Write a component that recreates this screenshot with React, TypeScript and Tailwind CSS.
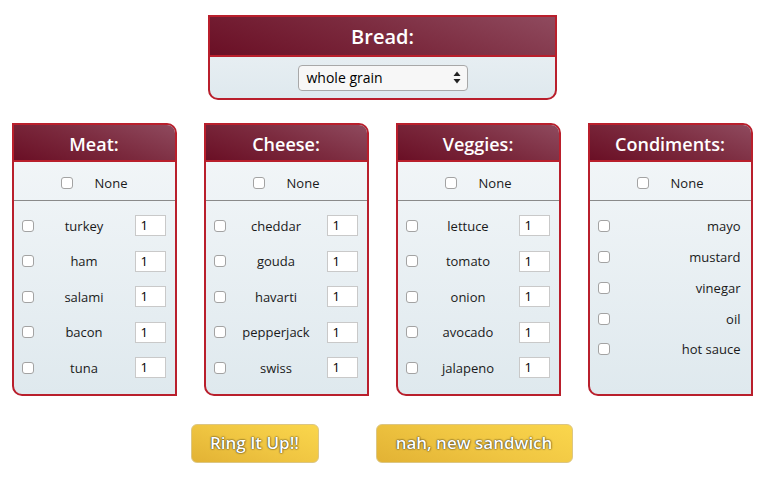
import React from "react";

const font = { fontFamily: '"Open Sans", "Lato", sans-serif' };

function Box() {
  return <span className="inline-block w-[12px] h-[12px] rounded-[3px] border border-[#a3a3a3] bg-white shrink-0" />;
}

function Header({ title }: { title: string }) {
  return (
    <div className="h-[37px] pt-[3px] flex items-center justify-center bg-[linear-gradient(20deg,#6a0f25_0%,#7b2a3e_50%,#8f4a5e_100%)] border-b-2 border-[#b91f2c]">
      <span className="text-white text-[18px] leading-[22px] font-semibold">{title}</span>
    </div>
  );
}

function Panel({ title, items, qty }: { title: string; items: string[]; qty: boolean }) {
  return (
    <div className="w-[165px] border-2 border-[#b91f2c] rounded-tr-[10px] rounded-bl-[10px] overflow-hidden flex flex-col bg-[linear-gradient(180deg,#f4f7f9_0%,#dfe9ee_100%)]">
      <Header title={title} />
      <div className="h-[39px] pt-[3px] flex items-center justify-center gap-[22px] border-b border-[#8a8a8a] text-[13px] leading-[18px] text-[#1a1a1a]">
        <Box />
        <span>None</span>
      </div>
      <div className={qty ? "pt-[7px] pb-[8px]" : "pt-[10px] pb-[7px]"}>
        {items.map((it) => (
          <div key={it} className={`flex items-center pl-[8px] text-[13px] leading-[18px] text-[#1a1a1a] ${qty ? "h-[35.5px] pr-[9px]" : "h-[30.75px] pr-[10px]"}`}>
            <Box />
            {qty ? (
              <>
                <span className="flex-1 text-center">{it}</span>
                <div className="w-[31px] h-[21px] border border-[#c9c9c9] bg-white text-[13px] leading-[19px] pl-[5px] text-black">1</div>
              </>
            ) : (
              <span className="flex-1 text-right">{it}</span>
            )}
          </div>
        ))}
      </div>
    </div>
  );
}

export default function App() {
  return (
    <div className="w-[767px] h-[481px] bg-white" style={font}>
      <div className="pt-[15px] flex justify-center">
        <div className="w-[349px] ml-[-2px] border-2 border-[#b91f2c] rounded-b-[10px] overflow-hidden bg-[linear-gradient(180deg,#eef3f6_0%,#dfe9ee_100%)]">
          <div className="h-[40px] pt-[1px] flex items-center justify-center bg-[linear-gradient(20deg,#6a0f25_0%,#7b2a3e_50%,#8f4a5e_100%)] border-b-2 border-[#b91f2c]">
            <span className="text-white text-[20px] leading-[24px] font-semibold">Bread:</span>
          </div>
          <div className="h-[41px] flex items-center justify-center">
            <div className="w-[170px] h-[26px] rounded-[4px] border border-[#a8a8a8] bg-[#f7f7f7] flex items-center pl-[8px] pr-[6px] text-[14px] leading-[18px] text-black">
              <span className="flex-1">whole grain</span>
              <svg width="8" height="13" viewBox="0 0 8 13">
                <path d="M4 0.5 L7.5 5 L0.5 5 Z" fill="#222" />
                <path d="M4 12.5 L7.5 8 L0.5 8 Z" fill="#222" />
              </svg>
            </div>
          </div>
        </div>
      </div>
      <div className="mt-[23px] flex justify-center gap-[27px] pr-[3px]">
        <Panel title="Meat:" items={["turkey", "ham", "salami", "bacon", "tuna"]} qty />
        <Panel title="Cheese:" items={["cheddar", "gouda", "havarti", "pepperjack", "swiss"]} qty />
        <Panel title="Veggies:" items={["lettuce", "tomato", "onion", "avocado", "jalapeno"]} qty />
        <Panel title="Condiments:" items={["mayo", "mustard", "vinegar", "oil", "hot sauce"]} qty={false} />
      </div>
      <div className="mt-[28px] flex justify-center gap-[57px] pr-[4px]">
        <div className="w-[128px] h-[39px] rounded-[6px] border border-[#dcc683] bg-[linear-gradient(20deg,#e2b234_0%,#f0c642_50%,#fad64c_100%)] flex items-center justify-center text-white text-[17px] leading-[22px] font-semibold [text-shadow:0_0_2px_rgba(0,0,0,0.8),0_0_1px_rgba(0,0,0,0.6)]">
          Ring It Up!!
        </div>
        <div className="w-[197px] h-[39px] rounded-[6px] border border-[#dcc683] bg-[linear-gradient(20deg,#e2b234_0%,#f0c642_50%,#fad64c_100%)] flex items-center justify-center text-white text-[17px] leading-[22px] font-semibold [text-shadow:0_0_2px_rgba(0,0,0,0.8),0_0_1px_rgba(0,0,0,0.6)]">
          nah, new sandwich
        </div>
      </div>
    </div>
  );
}
